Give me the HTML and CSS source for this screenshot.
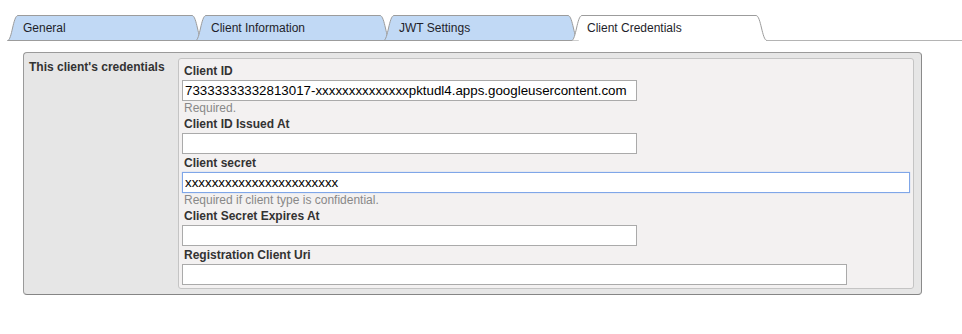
FILE: index.html
```html
<!DOCTYPE html>
<html lang="en">
<head>
    <meta charset="UTF-8">
    <title>Client Credentials</title>
    <link rel="stylesheet" href="styles.css">
</head>
<body>
    <ul class="tabs">
        <li class="tab">
            <svg class="tab-shape" viewBox="0 0 196 26" preserveAspectRatio="none">
                <path d="M0.5,25.5 C5,25.5 6,0.5 11,0.5 L185,0.5 C190,0.5 191,25.5 195.5,25.5 Z"/>
            </svg>
            <span class="tab-label">General</span>
        </li>
        <li class="tab">
            <svg class="tab-shape" viewBox="0 0 196 26" preserveAspectRatio="none">
                <path d="M0.5,25.5 C5,25.5 6,0.5 11,0.5 L185,0.5 C190,0.5 191,25.5 195.5,25.5 Z"/>
            </svg>
            <span class="tab-label">Client Information</span>
        </li>
        <li class="tab">
            <svg class="tab-shape" viewBox="0 0 196 26" preserveAspectRatio="none">
                <path d="M0.5,25.5 C5,25.5 6,0.5 11,0.5 L185,0.5 C190,0.5 191,25.5 195.5,25.5 Z"/>
            </svg>
            <span class="tab-label">JWT Settings</span>
        </li>
        <li class="tab active">
            <svg class="tab-shape" viewBox="0 0 196 26" preserveAspectRatio="none">
                <path d="M0.5,25.5 C5,25.5 6,0.5 11,0.5 L185,0.5 C190,0.5 191,25.5 196,25.5"/>
            </svg>
            <span class="tab-label">Client Credentials</span>
        </li>
        <li class="tab-rest"></li>
    </ul>

    <div class="panel">
        <div class="panel-title">This client's credentials</div>
        <div class="fields">
            <label class="field-label">Client ID</label>
            <input class="field-input" type="text" value="73333333332813017-xxxxxxxxxxxxxxpktudl4.apps.googleusercontent.com">
            <div class="field-help">Required.</div>

            <label class="field-label">Client ID Issued At</label>
            <input class="field-input" type="text" value="">

            <label class="field-label">Client secret</label>
            <input class="field-input wide focused" type="text" value="xxxxxxxxxxxxxxxxxxxxxxx">
            <div class="field-help">Required if client type is confidential.</div>

            <label class="field-label">Client Secret Expires At</label>
            <input class="field-input" type="text" value="">

            <label class="field-label">Registration Client Uri</label>
            <input class="field-input medium" type="text" value="">
        </div>
    </div>
</body>
</html>
```

FILE: styles.css
```css
body{
    margin: 0;
    background-color: #fff;
    font-family: "Liberation Sans", Arial, sans-serif;
    font-size: 12px;
    color: #222;
}
.tabs{
    display: flex;
    margin: 0;
    padding: 15px 0 0 7px;
    list-style: none;
}
.tab{
    position: relative;
    width: 196px;
    height: 26px;
    margin-right: -8px;
    flex-shrink: 0;
}
.tab-shape{
    position: absolute;
    left: 0;
    top: 0;
    width: 196px;
    height: 26px;
}
.tab-shape path{
    fill: #c1d9f5;
    stroke: #9c9c9c;
    stroke-width: 1;
}
.tab.active .tab-shape path{
    fill: #fff;
}
.tab-label{
    position: relative;
    display: block;
    padding-left: 16px;
    line-height: 26px;
    color: #1e1e2a;
}
.tab-rest{
    flex: 1;
    margin-left: 8px;
    border-bottom: 1px solid #b4b4b4;
}

.panel{
    display: grid;
    grid-template-columns: 149px 1fr;
    width: 885px;
    margin: 11px 0 0 23px;
    padding: 5px 7px 5px 5px;
    background-color: #e6e6e6;
    border: 1px solid #9a9a9a;
    border-right-color: #8a8a8a;
    border-bottom-color: #858585;
    border-radius: 4px;
}
.panel-title{
    font-weight: bold;
    line-height: 18px;
    color: #333;
}
.fields{
    display: flex;
    flex-direction: column;
    align-items: flex-start;
    padding: 3px;
    background-color: #f3f1f1;
    border: 1px solid #c4c4c4;
    border-radius: 3px;
}
.field-label{
    padding-left: 2px;
    font-weight: bold;
    line-height: 18px;
    color: #333;
}
.field-input{
    box-sizing: border-box;
    width: 455px;
    height: 21px;
    margin: 0;
    padding: 1px 2px;
    font-family: "Liberation Sans", Arial, sans-serif;
    font-size: 13.333px;
    color: #000;
    background-color: #fff;
    border: 1px solid #aaa;
    outline: none;
}
.field-input.wide{
    width: 728px;
}
.field-input.medium{
    width: 665px;
}
.field-input.focused{
    border-color: #7fa6e8;
    box-shadow: 0 0 1px #a8c4f2;
}
.field-help{
    padding-left: 2px;
    line-height: 14px;
    color: #888;
}
```
